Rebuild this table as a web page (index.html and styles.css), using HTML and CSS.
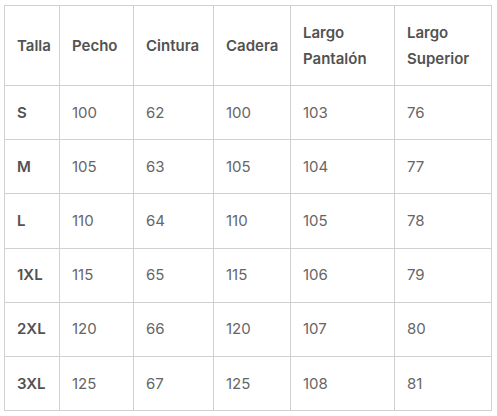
FILE: index.html
```html
<!DOCTYPE html>
<html lang="es">
<head>
<meta charset="utf-8">
<link rel="stylesheet" href="styles.css">
</head>
<body>
<table class="size-table">
  <colgroup>
    <col class="c1"><col class="c2"><col class="c3"><col class="c4"><col class="c5"><col class="c6">
  </colgroup>
  <thead>
    <tr><th>Talla</th><th>Pecho</th><th>Cintura</th><th>Cadera</th><th>Largo Pantalón</th><th>Largo Superior</th></tr>
  </thead>
  <tbody>
    <tr><th>S</th><td>100</td><td>62</td><td>100</td><td>103</td><td>76</td></tr>
    <tr><th>M</th><td>105</td><td>63</td><td>105</td><td>104</td><td>77</td></tr>
    <tr><th>L</th><td>110</td><td>64</td><td>110</td><td>105</td><td>78</td></tr>
    <tr><th>1XL</th><td>115</td><td>65</td><td>115</td><td>106</td><td>79</td></tr>
    <tr><th>2XL</th><td>120</td><td>66</td><td>120</td><td>107</td><td>80</td></tr>
    <tr><th>3XL</th><td>125</td><td>67</td><td>125</td><td>108</td><td>81</td></tr>
  </tbody>
</table>
</body>
</html>
```
FILE: styles.css
```css
html, body {
  margin: 0;
  background: #fff;
}
body {
  padding: 5px 0 0 4px;
  font-family: Inter, "Liberation Sans", sans-serif;
  font-size: 15px;
}
.size-table {
  border-collapse: collapse;
  table-layout: fixed;
  width: 487px;
}
.c1 { width: 55px; }
.c2 { width: 74px; }
.c3 { width: 80px; }
.c4 { width: 77px; }
.c5 { width: 104px; }
.c6 { width: 97px; }
.size-table th,
.size-table td {
  border: 1px solid #d0d0d0;
  padding: 13.6px 12px;
  line-height: 26px;
  text-align: left;
  vertical-align: middle;
}
.size-table th {
  font-weight: 600;
  color: #525252;
}
.size-table thead th {
  height: 52px;
  padding-top: 13.5px;
  padding-bottom: 13.5px;
}
.size-table td {
  font-weight: 400;
  color: #666;
}
```
